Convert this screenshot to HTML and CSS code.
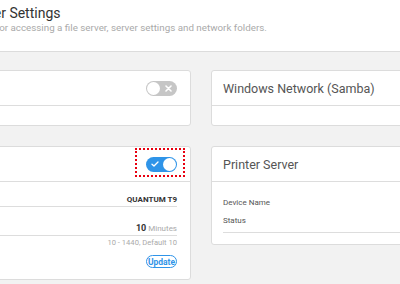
FILE: index.html
```html
<!DOCTYPE html>
<html lang="en">
  <head>
    <meta charset="UTF-8" />
    <meta name="viewport" content="width=device-width, initial-scale=1.0" />
    <title>File Server Settings</title>
    <link rel="stylesheet" href="styles.css">
  </head>
  <body>
    <header class="top">
      <div class="top-inner">
        <h1 class="title">File Server Settings</h1>
        <p class="subtitle">Preferences for accessing a file server, server settings and network folders.</p>
      </div>
    </header>

    <main class="grid">
      <section class="card">
        <div class="card-head">
          <span class="card-title">DLNA Media Server</span>
          <span class="switch off">
            <span class="knob"></span>
            <svg class="icon" width="7" height="7" viewBox="0 0 7 7">
              <path d="M1 1L6 6M6 1L1 6" stroke="#fff" stroke-width="1.6" stroke-linecap="round" />
            </svg>
          </span>
        </div>
        <div class="card-body"></div>
      </section>

      <section class="card">
        <div class="card-head">
          <span class="card-title">Windows Network (Samba)</span>
        </div>
        <div class="card-body"></div>
      </section>

      <section class="card">
        <div class="card-head">
          <span class="card-title">FTP Server</span>
          <span class="mark">
            <span class="switch on">
              <svg class="icon" width="8" height="6" viewBox="0 0 8 6">
                <path d="M1 3.2L3 5L7 1" fill="none" stroke="#fff" stroke-width="1.3" stroke-linecap="round" stroke-linejoin="round" />
              </svg>
              <span class="knob"></span>
            </span>
          </span>
        </div>
        <div class="card-body rows">
          <div class="row">
            <span class="label">Server Name</span>
            <span class="value strong">QUANTUM T9</span>
          </div>
          <div class="row spaced">
            <span class="label">Idle Timeout</span>
            <span class="value"><b class="num">10</b> <span class="unit">Minutes</span></span>
          </div>
          <div class="hint">10 - 1440, Default 10</div>
          <div class="actions">
            <button class="btn">Update</button>
          </div>
        </div>
      </section>

      <section class="card">
        <div class="card-head">
          <span class="card-title">Printer Server</span>
        </div>
        <div class="card-body list">
          <div class="list-row">Device Name</div>
          <div class="list-row lined">Status</div>
        </div>
      </section>
    </main>
  </body>
</html>
```

FILE: styles.css
```css
html,
body {
  overflow: hidden;
}

body {
  margin: 0;
  font-family: Roboto, "Liberation Sans", sans-serif;
  background-color: #f2f2f2;
  color: #333;
}

.top {
  height: 51px;
  background-color: #fff;
  border-bottom: 1px solid #dcdcdc;
}

.top-inner {
  margin-left: -59px;
  padding-top: 5px;
  white-space: nowrap;
}

.title {
  margin: 0;
  font-size: 14px;
  font-weight: 400;
  line-height: 17px;
  color: #333;
}

.subtitle {
  margin: 0;
  font-size: 9.8px;
  line-height: 12px;
  color: #aaa;
}

.grid {
  display: grid;
  grid-template-columns: 382px 382px;
  gap: 20px;
  align-items: start;
  margin-left: -191px;
  padding-top: 18px;
}

.card {
  background-color: #fff;
  border: 1px solid #dcdcdc;
  border-radius: 3px;
}

.card-head {
  height: 34px;
  display: flex;
  align-items: center;
  justify-content: space-between;
  padding: 0 13px 0 11px;
  border-bottom: 1px solid #dddddd;
}

.card-title {
  font-size: 12.5px;
  color: #555;
}

.card-body {
  height: 19px;
}

/* toggle */
.switch {
  width: 31px;
  height: 15px;
  box-sizing: border-box;
  padding: 1px;
  border-radius: 8px;
  display: flex;
  align-items: center;
  justify-content: space-between;
}

.switch.off {
  background-color: #c6c6c6;
}

.switch.on {
  background-color: #2f94e8;
}

.knob {
  width: 13px;
  height: 13px;
  border-radius: 50%;
  background-color: #fff;
}

.switch .icon {
  display: block;
  margin: 0 auto;
}

.mark {
  position: relative;
  display: flex;
}

.mark::after {
  content: "";
  position: absolute;
  left: -11px;
  right: -8px;
  top: -9px;
  bottom: -5px;
  border: 2px dotted #e8000f;
}

/* detail rows */
.rows {
  height: auto;
  padding: 12px 13px 11px 14px;
}

.row {
  display: flex;
  justify-content: space-between;
  line-height: 12px;
  font-size: 8px;
  border-bottom: 1px solid #ddd;
}

.row.spaced {
  margin-top: 15px;
}

.label {
  color: #555;
}

.value.strong {
  font-weight: 700;
  font-size: 8px;
  color: #333;
}

.num {
  font-size: 9px;
  color: #333;
}

.unit {
  color: #aaa;
}

.hint {
  margin-top: 1px;
  line-height: 12px;
  font-size: 7.6px;
  color: #aaa;
  text-align: right;
}

.actions {
  display: flex;
  justify-content: flex-end;
  margin-top: 6px;
}

.btn {
  width: 31px;
  height: 13px;
  box-sizing: border-box;
  padding: 0;
  border: 1.5px solid #2f94e8;
  border-radius: 7px;
  background-color: #fff;
  color: #2f94e8;
  font-family: Roboto, "Liberation Sans", sans-serif;
  font-size: 8.5px;
  font-weight: 700;
  line-height: 10px;
}

/* printer list */
.list {
  height: auto;
  padding: 15px 0 11px 11px;
}

.list-row {
  font-size: 8px;
  line-height: 12px;
  color: #555;
}

.list-row.lined {
  margin-top: 6px;
  padding-bottom: 5px;
  border-bottom: 1px solid #ddd;
}
```
